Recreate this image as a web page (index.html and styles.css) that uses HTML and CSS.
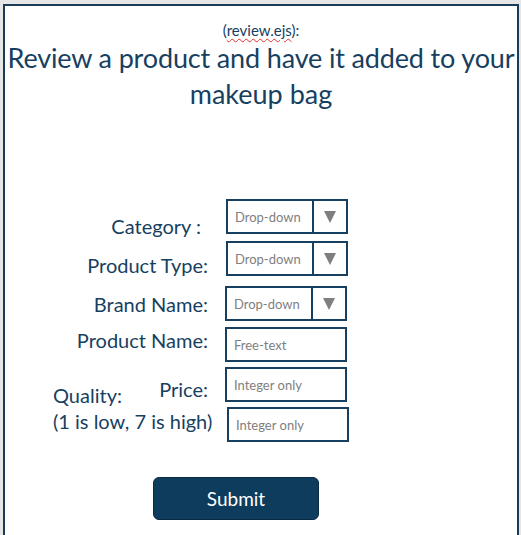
FILE: index.html
```html
<!DOCTYPE html>
<html>
<head>
<meta charset="utf-8">
<link rel="stylesheet" href="styles.css">
</head>
<body>
<div class="frame">
  <p class="file">(<span class="spell">review.ejs</span>):</p>
  <h1 class="title"><span class="line">Review a product and have it added to your</span><br>makeup bag</h1>
  <form class="form">
    <div class="row row-cat">
      <label class="label label-cat">Category :</label>
      <div class="box select"><span class="ph">Drop-down</span><span class="arrow"></span></div>
    </div>
    <div class="row row-type">
      <label class="label label-type">Product Type:</label>
      <div class="box select"><span class="ph">Drop-down</span><span class="arrow"></span></div>
    </div>
    <div class="row row-brand">
      <label class="label">Brand Name:</label>
      <div class="box select shift-left"><span class="ph">Drop-down</span><span class="arrow"></span></div>
    </div>
    <div class="row row-name">
      <label class="label label-name">Product Name:</label>
      <div class="box text shift-left"><span class="ph">Free-text</span></div>
    </div>
    <div class="pair">
      <label class="label label-price">Price:</label>
      <div class="box text shift-left cell-price"><span class="ph">Integer only</span></div>
      <label class="quality">Quality:<br>(1 is low, 7 is high)</label>
      <div class="box text shift-right cell-quality"><span class="ph">Integer only</span></div>
    </div>
  </form>
  <div class="actions">
    <button type="button" class="submit">Submit</button>
  </div>
</div>
</body>
</html>
```
FILE: styles.css
```css
html, body {
  margin: 0;
  padding: 0;
  height: 100%;
}
body {
  background: #e6e6e6;
  font-family: Lato, "Liberation Sans", sans-serif;
  color: #173f5f;
  overflow: hidden;
}
.frame {
  margin: 4px 0 0 3px;
  width: 512px;
  height: 540px;
  background: #ffffff;
  border: 2px solid #1b3c59;
  border-bottom: none;
  box-sizing: content-box;
}
.file {
  margin: 14px 0 0 0;
  text-align: center;
  font-size: 15px;
  line-height: 20px;
}
.spell {
  text-decoration: underline wavy #e03030;
  text-decoration-thickness: 1px;
  text-underline-offset: 2px;
}
.title {
  margin: 0;
  text-align: center;
  font-weight: 400;
  font-size: 27px;
  line-height: 36px;
  white-space: nowrap;
}
.line {
  letter-spacing: -0.15px;
}
.form {
  margin: 87px 0 0 35px;
  display: flex;
  flex-direction: column;
}
.row {
  display: flex;
  align-items: center;
  gap: 18px;
}
.row-type { margin-top: 7px; }
.row-brand { margin-top: 10px; }
.row-name { margin-top: 6px; }
.label {
  width: 168px;
  text-align: right;
  font-size: 20px;
  line-height: 24px;
}
.label-cat { padding-right: 7px; width: 161px; align-self: flex-end; margin-bottom: -4px; }
.label-type { align-self: flex-end; margin-bottom: -1px; }
.label-name { align-self: flex-start; padding-top: 1px; }
.box {
  box-sizing: border-box;
  width: 122px;
  height: 35px;
  border: 2px solid #173f5f;
  display: flex;
  align-items: center;
  background: #fff;
}
.shift-left { margin-left: -1px; }
.shift-right { margin-left: 1px; }
.ph {
  color: #808080;
  font-size: 13px;
  padding-left: 7px;
  flex: 1;
}
.arrow {
  align-self: stretch;
  width: 32px;
  border-left: 2px solid #173f5f;
  position: relative;
}
.arrow::after {
  content: "";
  position: absolute;
  left: 10px;
  top: 10px;
  border-left: 6px solid transparent;
  border-right: 6px solid transparent;
  border-top: 12px solid #7f7f7f;
}
.pair {
  margin-top: 5px;
  display: grid;
  grid-template-columns: 168px 122px;
  grid-template-rows: 35px 35px;
  column-gap: 18px;
  row-gap: 5px;
}
.label-price {
  grid-column: 1;
  grid-row: 1;
  align-self: end;
  margin-bottom: 1px;
}
.cell-price { grid-column: 2; grid-row: 1; }
.cell-quality { grid-column: 2; grid-row: 2; }
.quality {
  grid-column: 1;
  grid-row: 1 / 3;
  align-self: end;
  justify-self: start;
  margin-left: 13px;
  margin-bottom: 8px;
  font-size: 20px;
  line-height: 26px;
  white-space: nowrap;
}
.actions {
  margin-top: 35px;
  padding-left: 148px;
}
.submit {
  width: 166px;
  height: 43px;
  border: 1px solid #082a42;
  border-radius: 6px;
  background: #0d3c5c;
  color: #ffffff;
  font-family: Lato, "Liberation Sans", sans-serif;
  font-size: 19px;
  padding: 0;
}
```
